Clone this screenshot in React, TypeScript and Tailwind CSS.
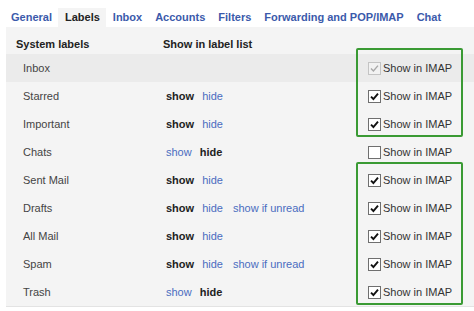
import React from "react";

type Row = {
  name: string;
  mode: "show" | "hide" | "none";
  unread?: boolean;
  imap: "on" | "off" | "locked";
  dark?: boolean;
};

const rows: Row[] = [
  { name: "Inbox", mode: "none", imap: "locked", dark: true },
  { name: "Starred", mode: "show", imap: "on" },
  { name: "Important", mode: "show", imap: "on" },
  { name: "Chats", mode: "hide", imap: "off" },
  { name: "Sent Mail", mode: "show", imap: "on" },
  { name: "Drafts", mode: "show", unread: true, imap: "on" },
  { name: "All Mail", mode: "show", imap: "on" },
  { name: "Spam", mode: "show", unread: true, imap: "on" },
  { name: "Trash", mode: "hide", imap: "on" },
];

const tabs = ["General", "Labels", "Inbox", "Accounts", "Filters", "Forwarding and POP/IMAP", "Chat"];

function Checkbox({ state }: { state: Row["imap"] }) {
  const locked = state === "locked";
  return (
    <span
      className={`flex items-center justify-center w-[13px] h-[13px] border ${
        locked ? "border-[#c4c4c4] bg-[#f2f2f2]" : "border-[#6f6f6f] bg-white"
      }`}
    >
      {state !== "off" && (
        <svg width="9" height="9" viewBox="0 0 9 9">
          <path
            d="M1 4.6 L3.4 7 L8 1.6"
            fill="none"
            stroke={locked ? "#a8a8a8" : "#111"}
            strokeWidth={locked ? 1.4 : 1.9}
          />
        </svg>
      )}
    </span>
  );
}

export default function App() {
  return (
    <div className="w-[474px] h-[311px] bg-white overflow-hidden font-['Liberation_Sans',Arial,sans-serif] text-[11px]">
      {/* Tabs */}
      <div className="flex pt-[8px] pl-[4.5px] h-[27px]">
        {tabs.map((t) => (
          <div
            key={t}
            className={`px-[6.5px] h-[19px] leading-[19px] font-bold ${
              t === "Labels" ? "bg-[#f4f4f4] text-[#222]" : "text-[#3b5aab]"
            }`}
          >
            {t}
          </div>
        ))}
      </div>

      {/* Panel */}
      <div className="relative ml-[6px] bg-[#f4f4f4] border-b border-[#e3e3e3]">
        <div className="flex h-[27px] pt-[10px] leading-[14px] font-bold text-[#222]">
          <div className="w-[157px] pl-[10px]">System labels</div>
          <div>Show in label list</div>
        </div>

        {rows.map((r) => (
          <div
            key={r.name}
            className={`flex items-center h-[28px] leading-[14px] ${r.dark ? "bg-[#ebebeb]" : ""}`}
          >
            <div className="w-[160px] pl-[17px] text-[#444]">{r.name}</div>
            <div className="w-[202px] flex">
              {r.mode === "show" && (
                <>
                  <span className="mr-[8px] font-bold text-[#222]">show</span>
                  <span className="mr-[10px] text-[#4a6cc0]">hide</span>
                </>
              )}
              {r.mode === "hide" && (
                <>
                  <span className="mr-[8px] text-[#4a6cc0]">show</span>
                  <span className="font-bold text-[#222]">hide</span>
                </>
              )}
              {r.unread && <span className="text-[#4a6cc0]">show if unread</span>}
            </div>
            <div className="flex items-center gap-[2px] text-[#333]">
              <Checkbox state={r.imap} />
              <span>Show in IMAP</span>
            </div>
          </div>
        ))}

        {/* highlight annotations */}
        <div className="absolute left-[350px] top-[21px] w-[107px] h-[89px] border-2 border-[#3a9a34] rounded-[2px]" />
        <div className="absolute left-[350px] top-[135px] w-[107px] h-[143px] border-2 border-[#3a9a34] rounded-[2px]" />
      </div>
    </div>
  );
}
